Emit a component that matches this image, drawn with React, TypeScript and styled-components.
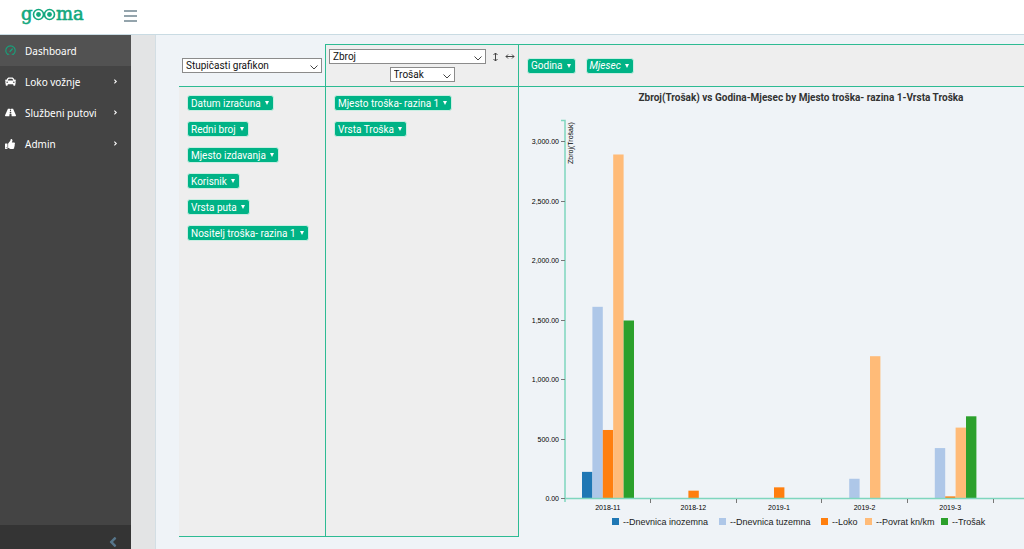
import React from "react";
import styled, { createGlobalStyle } from "styled-components";
import { FaCar, FaRoad, FaThumbsUp, FaAngleRight, FaAngleLeft } from "react-icons/fa";

const GREEN = "#00b386";
const LINE = "#2dbb93";

const GlobalStyle = createGlobalStyle`
  *, *::before, *::after { box-sizing: border-box; }
  html, body, #root { height: 100%; }
  body { margin: 0; font-family: Roboto, sans-serif; font-size: 10px; color: #222; background: #eff3f7; }
`;

const Page = styled.div`
  display: flex;
  flex-direction: column;
  height: 100vh;
  overflow: hidden;
`;

const TopBar = styled.header`
  display: flex;
  flex: none;
  align-items: center;
  gap: 40px;
  height: 35px;
  padding: 0 22px 3px;
  background: #fff;
  border-bottom: 1px solid #c9dbe3;
`;

const Logo = styled.svg`
  display: block;
  width: 62px;
  height: 24px;
  overflow: visible;
  font: 18px "DejaVu Serif", serif;
`;

const MenuButton = styled.button`
  display: flex;
  flex-direction: column;
  gap: 3px;
  width: 13px;
  padding: 0;
  border: 0;
  background: none;
`;

const MenuLine = styled.span`
  height: 2px;
  background: #94a4ac;
`;

const Body = styled.div`
  display: flex;
  flex: 1;
  min-height: 0;
`;

const Sidebar = styled.nav`
  display: flex;
  flex: none;
  flex-direction: column;
  width: 131px;
  background: #444;
`;

const NavLink = styled.a<{ $active?: boolean }>`
  display: flex;
  align-items: center;
  height: 31px;
  padding: 0 12px 0 5px;
  background: ${(p) => (p.$active ? "#525252" : "transparent")};
  color: #fff;
  font: 10px "Noto Sans", sans-serif;
  text-decoration: none;
`;

const NavIcon = styled.span<{ $green?: boolean }>`
  display: flex;
  width: 20px;
  font-size: 11px;
  color: ${(p) => (p.$green ? "#16a37c" : "#fff")};
`;

const NavText = styled.span`
  flex: 1;
`;

const Collapse = styled.button`
  display: flex;
  align-items: center;
  justify-content: flex-end;
  height: 24px;
  margin-top: auto;
  padding: 9px 10px 0 0;
  border: 0;
  background: #343434;
  color: #56758a;
  font-size: 16px;
`;

const Gutter = styled.div`
  flex: none;
  width: 25px;
  background: #e3e4e5;
  border-right: 1px solid #d3dee4;
`;

const Main = styled.main`
  flex: 1;
  min-width: 0;
  padding: 9px 0 0 23px;
`;

const Pivot = styled.div`
  display: grid;
  grid-template-columns: 146px 194px 1fr;
  grid-template-rows: 42px 451px;
`;

const ChartPicker = styled.div`
  display: flex;
  align-items: center;
  padding: 0 3px;
`;

const Aggregator = styled.div`
  display: flex;
  flex-direction: column;
  align-items: center;
  gap: 3px;
  padding: 4px 3px;
  background: #eee;
  border: solid ${LINE};
  border-width: 1px 1px 0;
`;

const AggregatorRow = styled.div`
  display: flex;
  align-items: center;
  align-self: stretch;
  gap: 7px;
`;

const SelectBox = styled.span<{ $width: number }>`
  position: relative;
  display: block;
  width: ${(p) => p.$width}px;
`;

const Select = styled.select`
  display: block;
  width: 100%;
  height: 15px;
  padding: 0 3px;
  appearance: none;
  border: 1px solid #8b8b8b;
  border-radius: 0;
  background: #fff;
  color: #111;
  font: 10px Roboto, sans-serif;
`;

const Chevron = styled.svg`
  position: absolute;
  right: 4px;
  top: 7px;
  pointer-events: none;
`;

const SortButton = styled.button`
  padding: 0;
  border: 0;
  background: none;
`;

const Fields = styled.div<{ $row?: boolean }>`
  display: flex;
  flex-direction: ${(p) => (p.$row ? "row" : "column")};
  align-items: ${(p) => (p.$row ? "center" : "flex-start")};
  gap: 10px;
  padding: ${(p) => (p.$row ? "0 8px" : "8px")};
  background: #eee;
  border: 0 solid ${LINE};
`;

const ColumnFields = styled(Fields)`
  border-top-width: 1px;
`;

const UnusedFields = styled(Fields)`
  border-width: 1px 0;
`;

const RowFields = styled(Fields)`
  border-width: 1px;
`;

const Field = styled.button<{ $italic?: boolean }>`
  display: flex;
  align-items: center;
  gap: 4px;
  height: 16px;
  padding: 0 4px 0 3px;
  border: 1px solid #c8eee2;
  border-radius: 3px;
  background: ${GREEN};
  color: #fff;
  font: ${(p) => (p.$italic ? "italic" : "normal")} 10px Roboto, sans-serif;
  white-space: nowrap;
`;

const Caret = styled.span`
  border: solid transparent;
  border-width: 4px 2px 0;
  border-top-color: #fff;
`;

const ChartCell = styled.div`
  min-width: 0;
  overflow: hidden;
  border-top: 1px solid ${LINE};
`;

const ChartSvg = styled.svg`
  display: block;
  width: 100%;
  height: 450px;
`;

const Title = styled.text`
  font: bold 10px Roboto, sans-serif;
  fill: #333;
`;

const AxisText = styled.text`
  font: 7px "Liberation Sans", sans-serif;
  fill: #000;
`;

const LegendText = styled.text`
  font: 9px "Liberation Sans", sans-serif;
  fill: #222;
`;

function Gauge() {
  return (
    <svg width="11" height="11" viewBox="0 0 11 11" fill="none" stroke="currentColor" strokeLinecap="round" aria-hidden="true">
      <path d="M2.6 9.3a4.7 4.7 0 1 1 5.8 0M2.6 9.3h1.2M8.4 9.3H7.200" strokeWidth="1.1" />
      <path d="M5 6.500 7.300 4" strokeWidth="1.2" />
    </svg>
  );
}

const navItems = [
  { label: "Dashboard", icon: <Gauge />, active: true },
  { label: "Loko vožnje", icon: <FaCar /> },
  { label: "Službeni putovi", icon: <FaRoad /> },
  { label: "Admin", icon: <FaThumbsUp size={10} /> },
];

const unused = ["Datum izračuna", "Redni broj", "Mjesto izdavanja", "Korisnik", "Vrsta puta", "Nositelj troška- razina 1"];
const rows = ["Mjesto troška- razina 1", "Vrsta Troška"];

const series = [
  { name: "--Dnevnica inozemna", color: "#1f77b4", x: 93 },
  { name: "--Dnevnica tuzemna", color: "#aec7e8", x: 200 },
  { name: "--Loko", color: "#ff7f0e", x: 302 },
  { name: "--Povrat kn/km", color: "#ffbb78", x: 346 },
  { name: "--Trošak", color: "#2ca02c", x: 422 },
];

const months = [
  { label: "2018-11", values: [228, 1615, 580, 2895, 1500] },
  { label: "2018-12", values: [0, 0, 70, 0, 0] },
  { label: "2019-1", values: [0, 0, 98, 0, 0] },
  { label: "2019-2", values: [0, 170, 0, 1200, 0] },
  { label: "2019-3", values: [0, 428, 22, 600, 695] },
];

const ORIGIN = { x: 46, y: 412 };
const STEP = 85.6;
const BAR = 10.4;
const scale = (v: number) => v * 0.119;

function Chart() {
  return (
    <ChartSvg role="img" aria-label="Zbroj(Trošak) vs Godina-Mjesec">
      <Title x="282" y="14" textAnchor="middle">
        Zbroj(Trošak) vs Godina-Mjesec by Mjesto troška- razina 1-Vrsta Troška
      </Title>
      {months.map((m, i) =>
        m.values.map((v, s) => (
          <rect
            key={`${m.label}-${s}`}
            x={ORIGIN.x + STEP * i + 17 + BAR * s}
            y={ORIGIN.y - scale(v)}
            width={BAR}
            height={scale(v)}
            fill={series[s].color}
          />
        ))
      )}
      <path d="M42 33.5h4V415M46 411.5H2000" fill="none" stroke="#7fd6be" strokeWidth="1.5" />
      {[0, 500, 1000, 1500, 2000, 2500, 3000].map((v) => (
        <g key={v}>
          <path d={`M42 ${Math.round(ORIGIN.y - scale(v)) - 0.5}h4`} stroke="#777" />
          <AxisText x="40" y={Math.round(ORIGIN.y - scale(v)) + 2} textAnchor="end">
            {v.toLocaleString("en-US", { minimumFractionDigits: 2 })}
          </AxisText>
        </g>
      ))}
      {months.map((m, i) => (
        <g key={m.label}>
          <path d={`M${Math.floor(ORIGIN.x + STEP * (i + 1)) + 0.5} 412v4`} stroke="#777" />
          <AxisText x={ORIGIN.x + STEP * (i + 0.5)} y="423" textAnchor="middle">
            {m.label}
          </AxisText>
        </g>
      ))}
      <AxisText transform="translate(54 77) rotate(-90)">Zbroj(Trošak)</AxisText>
      {series.map((s) => (
        <g key={s.name}>
          <rect x={s.x} y="431" width="7" height="7" fill={s.color} />
          <LegendText x={s.x + 11} y="438">{s.name}</LegendText>
        </g>
      ))}
    </ChartSvg>
  );
}

function Picker({ label, value, width }: { label: string; value: string; width: number }) {
  return (
    <SelectBox $width={width}>
      <Select aria-label={label}>
        <option>{value}</option>
      </Select>
      <Chevron width="8" height="5" viewBox="0 0 8 5" fill="none" stroke="#444">
        <path d="M.5.5 4 4 7.5.5" />
      </Chevron>
    </SelectBox>
  );
}

function FieldButton({ name, italic }: { name: string; italic?: boolean }) {
  return (
    <Field $italic={italic}>
      {name}
      <Caret />
    </Field>
  );
}

export default function App() {
  return (
    <Page>
      <GlobalStyle />
      <TopBar>
        <Logo role="img" aria-label="gooma" fill="#12a87e">
          <g stroke="#12a87e" strokeWidth="0.6">
            <text x="-1" y="16">g</text>
            <text x="34" y="16">ma</text>
          </g>
          <g fill="none" stroke="#12a87e" strokeWidth="1.6">
            <circle cx="16.5" cy="10.5" r="5" />
            <circle cx="27.5" cy="10.5" r="5" />
          </g>
          <circle cx="16.5" cy="10.5" r="2.4" />
          <circle cx="27.5" cy="10.5" r="2.4" />
        </Logo>
        <MenuButton aria-label="Menu">
          <MenuLine />
          <MenuLine />
          <MenuLine />
        </MenuButton>
      </TopBar>
      <Body>
        <Sidebar>
          {navItems.map((n) => (
            <NavLink key={n.label} href="#" $active={n.active}>
              <NavIcon $green={n.active}>{n.icon}</NavIcon>
              <NavText>{n.label}</NavText>
              {!n.active && <FaAngleRight size={7} />}
            </NavLink>
          ))}
          <Collapse aria-label="Collapse sidebar">
            <FaAngleLeft />
          </Collapse>
        </Sidebar>
        <Gutter />
        <Main>
          <Pivot>
            <ChartPicker>
              <Picker label="Prikaz" value="Stupičasti grafikon" width={140} />
            </ChartPicker>
            <Aggregator>
              <AggregatorRow>
                <Picker label="Agregacija" value="Zbroj" width={159} />
                <SortButton aria-label="Sort rows">
                  <svg width="5" height="10" viewBox="0 0 5 10" fill="none" stroke="#444" display="block">
                    <path d="M2.5 1v8M.5 3l2-2 2 2M.5 7l2 2 2-2" />
                  </svg>
                </SortButton>
                <SortButton aria-label="Sort columns">
                  <svg width="10" height="5" viewBox="0 0 10 5" fill="none" stroke="#444" display="block">
                    <path d="M1 2.5h8M3 .5l-2 2 2 2M7 .5l2 2-2 2" />
                  </svg>
                </SortButton>
              </AggregatorRow>
              <Picker label="Vrijednost" value="Trošak" width={65} />
            </Aggregator>
            <ColumnFields $row>
              <FieldButton name="Godina" />
              <FieldButton name="Mjesec" italic />
            </ColumnFields>
            <UnusedFields>
              {unused.map((f) => (
                <FieldButton key={f} name={f} />
              ))}
            </UnusedFields>
            <RowFields>
              {rows.map((f) => (
                <FieldButton key={f} name={f} />
              ))}
            </RowFields>
            <ChartCell>
              <Chart />
            </ChartCell>
          </Pivot>
        </Main>
      </Body>
    </Page>
  );
}
